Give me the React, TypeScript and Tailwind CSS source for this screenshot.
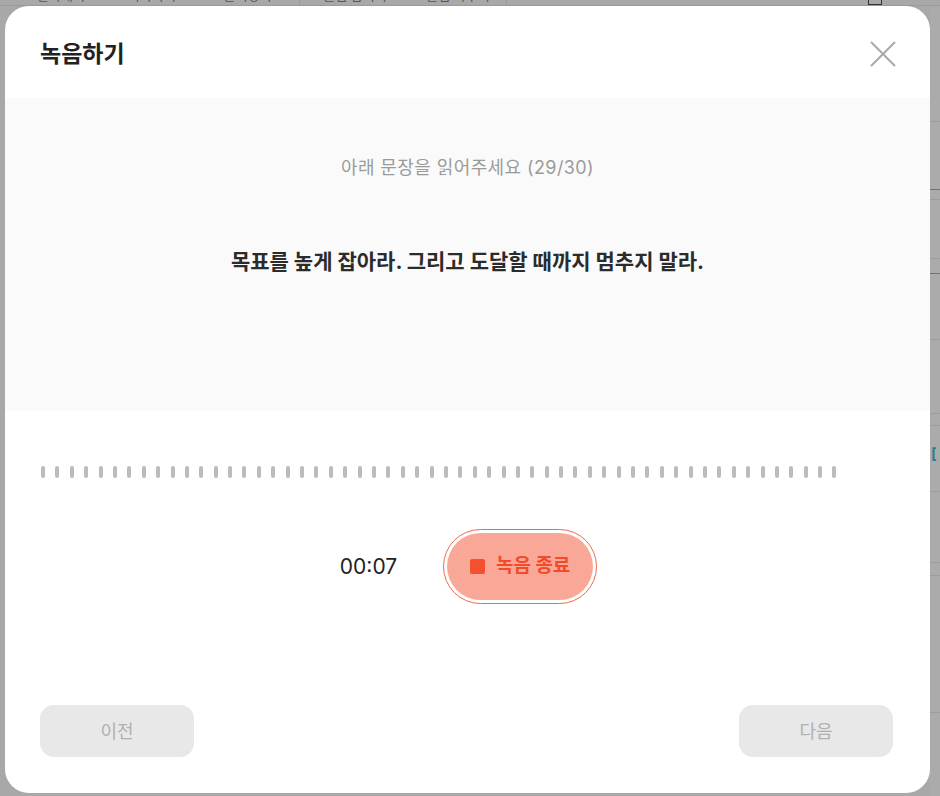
import { useState } from 'react'

const FONT = 'font-["Inter","Noto_Sans_CJK_KR",sans-serif]'

const TOOLBAR = [
  { label: '잘라내기', w: 'w-[94px]' },
  { label: '복사하기', w: 'w-[88px]' },
  { label: '붙여넣기', w: 'w-[104px]' },
  { label: '클립 합치기', w: 'w-[110px]' },
  { label: '클립 나누기', w: 'w-[97px]' },
]

// Right edge of the app that peeks out behind the dialog
const SIDE_ROWS = [
  { h: 'h-[116px]', c: 'border-[#9d9d9d]' },
  { h: 'h-[68px]', c: 'border-[#3d8792]' },
  { h: 'h-[10px]', c: 'border-[#9d9d9d]' },
  { h: 'h-[59px]', c: 'border-[#9d9d9d]' },
  { h: 'h-[15px]', c: 'border-[#3d8792]' },
  { h: 'h-[66px]', c: 'border-[#9d9d9d]' },
  { h: 'h-[74px]', c: 'border-[#9d9d9d]' },
  { h: 'h-[12px]', c: 'border-[#9d9d9d]' },
  { h: 'h-[66px]', c: 'border-[#9d9d9d]' },
  { h: 'h-[71px]', c: 'border-[#9d9d9d]' },
  { h: 'h-[13px]', c: 'border-[#9d9d9d]' },
  { h: 'h-[137px]', c: 'border-[#9d9d9d]' },
]

function Backdrop() {
  return (
    <div className="flex h-full flex-col">
      <div className="flex h-[6px] items-end overflow-hidden border-b border-[#9a9a9a]">
        <div className="flex h-[20px] items-end pl-[14px] text-[13px] leading-[20px] text-[#555]">
          {TOOLBAR.map((t, i) => (
            <div key={t.label} className={`${t.w} ${i === 2 || i === 4 ? 'border-r border-[#999]' : ''} text-center`}>
              {t.label}
            </div>
          ))}
          <div className="w-[212px] border-r border-[#999]" />
          <div className="w-[129px] border-r border-[#999]" />
          <div className="ml-[20px] h-[14px] w-[14px] border border-[#333]" />
        </div>
      </div>
      <div className="flex flex-1">
        <div className="flex-1" />
        <div className="flex w-[10px] flex-col bg-[#ababab]">
          {SIDE_ROWS.map((r, i) => (
            <div key={i} className={`${r.h} ${r.c} relative border-b`}>
              {i === 8 && (
                <span className="absolute left-[1px] top-[20px] text-[15px] font-bold leading-none text-[#2f7f8b]">[</span>
              )}
            </div>
          ))}
        </div>
      </div>
    </div>
  )
}

function Waveform() {
  const bars = Array.from({ length: 56 })
  return (
    <div className="flex h-[12px] gap-[10.4px]">
      {bars.map((_, i) => (
        <div key={i} className="h-[12px] w-[4px] rounded-full bg-[#bcbcbc]" />
      ))}
    </div>
  )
}

export default function App() {
  const [recording, setRecording] = useState(true)

  return (
    <div className={`relative h-[796px] w-full overflow-hidden bg-[#a8a8a8] ${FONT}`}>
      <Backdrop />

      {/* Dialog */}
      <div className="absolute left-[5px] top-[6px] flex h-[787px] w-[925px] flex-col overflow-hidden rounded-[24px] bg-white">
        <div className="flex h-[92px] items-center justify-between pl-[35px] pr-[32px] pt-[4px]">
          <h1 className="text-[23px] font-bold text-[#222]">녹음하기</h1>
          <button className="flex h-[30px] w-[30px] items-center justify-center">
            <svg width="26" height="26" viewBox="0 0 26 26" fill="none" stroke="#a9a9a9" strokeWidth="2">
              <path d="M1 1L25 25M25 1L1 25" />
            </svg>
          </button>
        </div>

        <div className="flex h-[313px] flex-col items-center bg-[#fafafa] pt-[58px]">
          <p className="text-[18px] leading-[24px] tracking-[0.4px] text-[#9a9a9a]">아래 문장을 읽어주세요 (29/30)</p>
          <p className="mt-[67px] text-[21px] font-bold leading-[30px] text-[#2b2b2b]">
            목표를 높게 잡아라. 그리고 도달할 때까지 멈추지 말라.
          </p>
        </div>

        <div className="px-[36px] pt-[55px]">
          <Waveform />
        </div>

        <div className="mt-[51px] flex items-center justify-center pl-[2px]">
          <span className="text-[21px] leading-none text-[#222]">00:07</span>
          <button
            onClick={() => setRecording(!recording)}
            className="ml-[46px] h-[75px] w-[154px] rounded-full border-[1.5px] border-[#f2694d] bg-white p-[3px]"
          >
            <span className="flex h-full w-full items-center justify-center gap-[11px] rounded-full bg-[#f9a897]">
              <span className="h-[15px] w-[15px] rounded-[2px] bg-[#f44f2f]" />
              <span className="text-[19px] font-bold text-[#f24a2a]">녹음 종료</span>
            </span>
          </button>
        </div>

        <div className="mt-auto flex justify-between pb-[36px] pl-[35px] pr-[37px]">
          <button className="h-[52px] w-[154px] rounded-[14px] bg-[#e8e8e8] text-[18px] text-[#b0b0b0]">이전</button>
          <button className="h-[52px] w-[154px] rounded-[14px] bg-[#e8e8e8] text-[18px] text-[#b0b0b0]">다음</button>
        </div>
      </div>
    </div>
  )
}
